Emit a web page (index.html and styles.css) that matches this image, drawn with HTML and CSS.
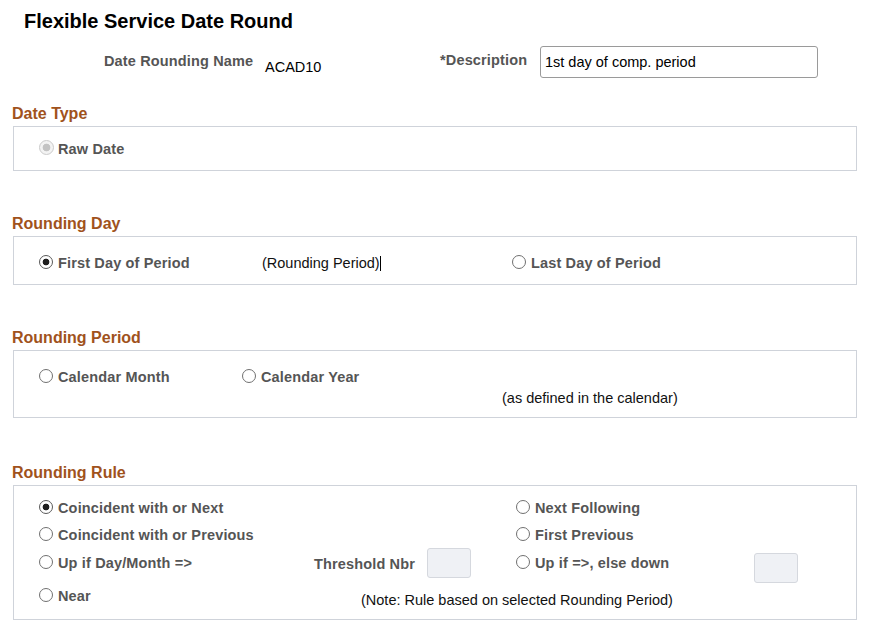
FILE: index.html
```html
<!DOCTYPE html>
<html lang="en">
<head>
<meta charset="utf-8">
<title>Flexible Service Date Round</title>
<link rel="stylesheet" href="styles.css">
</head>
<body>
<div class="page">
  <h1 class="title">Flexible Service Date Round</h1>

  <div class="keyrow">
    <span class="label lbl-name">Date Rounding Name</span>
    <span class="value val-name">ACAD10</span>
    <span class="label lbl-desc">*Description</span>
    <input class="input-desc" type="text" value="1st day of comp. period" readonly>
  </div>

  <section class="group g-datetype">
    <h2 class="group-title">Date Type</h2>
    <div class="group-box box-datetype">
      <div class="opt disabled"><span class="radio checked"></span>Raw Date</div>
    </div>
  </section>

  <section class="group g-day">
    <h2 class="group-title">Rounding Day</h2>
    <div class="group-box box-day">
      <div class="opt day-first"><span class="radio checked"></span>First Day of Period</div>
      <div class="plain day-mid">(Rounding Period)<span class="caret"></span></div>
      <div class="opt"><span class="radio"></span>Last Day of Period</div>
    </div>
  </section>

  <section class="group g-period">
    <h2 class="group-title">Rounding Period</h2>
    <div class="group-box box-period">
      <div class="period-row">
        <div class="opt period-month"><span class="radio"></span>Calendar Month</div>
        <div class="opt"><span class="radio"></span>Calendar Year</div>
      </div>
      <div class="plain period-note">(as defined in the calendar)</div>
    </div>
  </section>

  <section class="group g-rule">
    <h2 class="group-title">Rounding Rule</h2>
    <div class="group-box box-rule">
      <div class="opt r1a"><span class="radio checked"></span>Coincident with or Next</div>
      <div class="opt r1c"><span class="radio"></span>Next Following</div>
      <div class="opt r2a"><span class="radio"></span>Coincident with or Previous</div>
      <div class="opt r2c"><span class="radio"></span>First Previous</div>
      <div class="opt r3a"><span class="radio"></span>Up if Day/Month =&gt;</div>
      <div class="threshold r3b"><span class="label thr-label">Threshold Nbr</span><span class="box-input"></span></div>
      <div class="opt r3c"><span class="radio"></span>Up if =&gt;, else down</div>
      <span class="box-input r3d"></span>
      <div class="opt r4a"><span class="radio"></span>Near</div>
      <div class="plain r4b">(Note: Rule based on selected Rounding Period)</div>
    </div>
  </section>
</div>
</body>
</html>
```

FILE: styles.css
```css
body {
  margin: 0;
  background: #ffffff;
  color: #000000;
  font-family: "Liberation Sans", Arial, sans-serif;
}

.page {
  width: 869px;
}

.title {
  margin: 0;
  padding: 9px 0 0 24px;
  font-size: 20px;
  line-height: 24px;
  font-weight: bold;
  color: #000000;
}

/* key fields row */
.keyrow {
  display: flex;
  align-items: flex-start;
  margin-top: 13px;
  font-size: 14.5px;
  line-height: 18px;
}

.label {
  font-weight: bold;
  color: #555555;
  letter-spacing: 0.15px;
  white-space: nowrap;
}

.lbl-name {
  margin-left: 104px;
  width: 161px;
  margin-top: 6px;
}

.val-name {
  width: 175px;
  margin-top: 12px;
  color: #000000;
}

.lbl-desc {
  width: 100px;
  margin-top: 5px;
}

.input-desc {
  box-sizing: border-box;
  width: 278px;
  height: 32px;
  margin: 0;
  padding: 0 0 0 4px;
  border: 1px solid #9a9a9a;
  border-radius: 3px;
  background: #ffffff;
  font-family: "Liberation Sans", Arial, sans-serif;
  font-size: 14.5px;
  color: #000000;
  outline: none;
}

/* group boxes */
.group {
  margin-left: 13px;
  width: 844px;
}

.g-datetype { margin-top: 26px; }
.g-day { margin-top: 43px; }
.g-period { margin-top: 43px; }
.g-rule { margin-top: 45px; }

.group-title {
  margin: 0 0 3px -1px;
  font-size: 16px;
  line-height: 19px;
  font-weight: bold;
  color: #a0521c;
}

.group-box {
  box-sizing: border-box;
  border: 1px solid #cfd3da;
  font-size: 14.5px;
  line-height: 18px;
}

/* radio options */
.opt {
  display: flex;
  align-items: center;
  gap: 5px;
  font-weight: bold;
  color: #555555;
  letter-spacing: 0.15px;
  white-space: nowrap;
}

.radio {
  flex: none;
  box-sizing: border-box;
  width: 14px;
  height: 14px;
  margin-bottom: 3px;
  border: 1.5px solid #707070;
  border-radius: 50%;
  background: #ffffff;
}

.radio.checked {
  border-color: #5a5a5a;
  background: radial-gradient(circle, #1e1e1e 0, #1e1e1e 3px, #ffffff 3.7px);
}

.opt.disabled {
  gap: 4px;
}

.disabled .radio {
  width: 15px;
  height: 15px;
  border-color: #cacaca;
  background: radial-gradient(circle, #c3c3c3 0, #c3c3c3 3.5px, #f3f3f3 4.2px);
}

.plain {
  color: #111111;
  white-space: nowrap;
}

.caret {
  display: inline-block;
  width: 1px;
  height: 15px;
  background: #000000;
  vertical-align: -3px;
}

/* Date Type */
.box-datetype {
  padding: 13px 0 12px 25px;
}

/* Rounding Day */
.box-day {
  display: flex;
  align-items: center;
  padding: 17px 0 12px 25px;
}

.day-first { width: 223px; }
.day-mid { width: 250px; }

/* Rounding Period */
.box-period {
  padding: 17px 0 10px 25px;
}

.period-row {
  display: flex;
}

.period-month { width: 203px; }

.period-note {
  margin-top: 3px;
  padding-left: 463px;
}

/* Rounding Rule */
.box-rule {
  display: grid;
  grid-template-columns: 275px 202px 238px 1fr;
  grid-template-rows: 27px 20px 34px 39px;
  padding: 13px 0 0 25px;
}

.r1a { grid-area: 1 / 1; align-self: start; }
.r1c { grid-area: 1 / 3; align-self: start; }
.r2a { grid-area: 2 / 1; align-self: start; }
.r2c { grid-area: 2 / 3; align-self: start; }
.r3a { grid-area: 3 / 1; align-self: center; }
.r3b { grid-area: 3 / 2; align-self: center; }
.r3c { grid-area: 3 / 3; align-self: center; }
.r3d { grid-area: 3 / 4; align-self: center; margin-top: 10px; }
.r4a { grid-area: 4 / 1; align-self: start; margin-top: 7px; }
.r4b { grid-area: 4 / 2 / 5 / 5; align-self: start; margin-top: 11px; margin-left: 47px; }

.threshold {
  display: flex;
  align-items: center;
}

.thr-label {
  width: 113px;
  padding-top: 1px;
}

.box-input {
  display: block;
  box-sizing: border-box;
  width: 44px;
  height: 30px;
  border: 1px solid #d5d8de;
  border-radius: 3px;
  background: #eff1f5;
}
```
